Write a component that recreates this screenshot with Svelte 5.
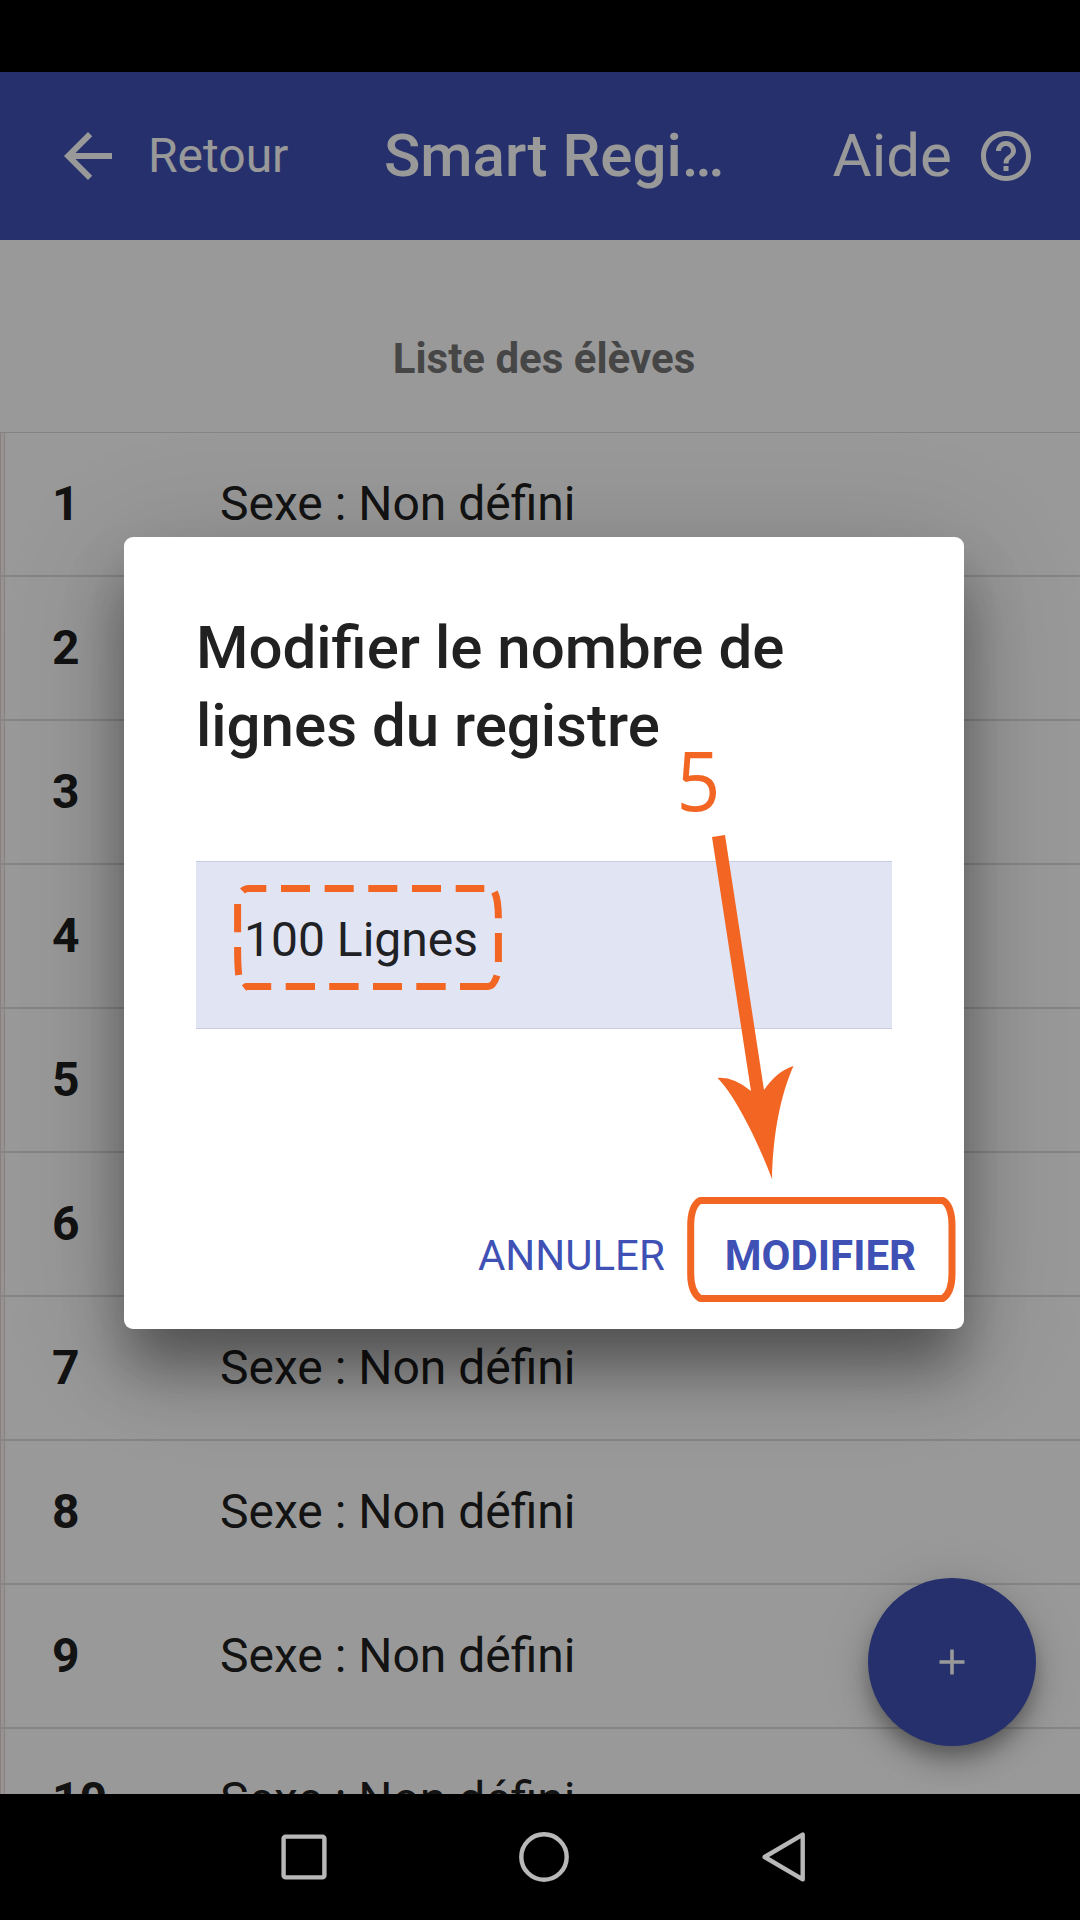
<script>
  const rows = Array.from({ length: 10 }, (_, i) => i + 1);
</script>

<div class="screen">
  <div class="status"></div>

  <header class="toolbar">
    <svg class="back" viewBox="0 0 24 24"><path d="M20 11H7.83l5.59-5.59L12 4l-8 8 8 8 1.41-1.41L7.83 13H20v-2z" /></svg>
    <span class="retour">Retour</span>
    <h1>Smart Regi…</h1>
    <span class="aide">Aide</span>
    <svg class="help" viewBox="0 0 24 24"><path d="M11 18h2v-2h-2v2zm1-16C6.48 2 2 6.48 2 12s4.48 10 10 10 10-4.48 10-10S17.52 2 12 2zm0 18c-4.41 0-8-3.59-8-8s3.59-8 8-8 8 3.59 8 8-3.59 8-8 8zm0-14c-2.21 0-4 1.79-4 4h2c0-1.1.9-2 2-2s2 .9 2 2c0 2-3 1.75-3 5h2c0-2.25 3-2.5 3-5 0-2.21-1.79-4-4-4z" /></svg>
  </header>

  <main>
    <h2>Liste des élèves</h2>
    <div class="list">
      {#each rows as n}
        <div class="row"><b>{n}</b><span>Sexe : Non défini</span></div>
      {/each}
    </div>
    <button class="fab" aria-label="Ajouter">
      <svg viewBox="0 0 26 26"><path d="M13 .5v25M.5 13h25" /></svg>
    </button>
  </main>

  <nav>
    <svg viewBox="0 0 56 56"><rect x="7.6" y="7.6" width="40.8" height="40.8" rx="2" /></svg>
    <svg viewBox="0 0 56 56"><circle cx="28" cy="28" r="22.7" /></svg>
    <svg viewBox="0 0 56 56"><path d="M46.7 5.6v44.8L8.6 28z" /></svg>
  </nav>

  <div class="overlay">
    <section class="dialog">
      <h3>Modifier le nombre de lignes du registre</h3>
      <div class="field">100 Lignes</div>
      <div class="actions">
        <span>ANNULER</span>
        <strong>MODIFIER</strong>
      </div>
    </section>
  </div>

  <svg class="marks" viewBox="0 0 1080 1920">
    <g class="stroke">
      <path d="M242.5 891Q245 888.5 249 888.5H266.3M281 888.5h29M324.7 888.5h29M368.3 888.5h29M412 888.5h29M455.7 888.5h28.6" />
      <path d="M494.5 892Q498.4 900 498.4 918.3M498.4 933v29M497 975.5Q493.5 986.5 488 986.5H460M445.7 986.5h-29.4M402 986.5h-29M358.6 986.5h-29.4M315 986.5h-29.3M271.2 986.5H246L244 988" />
      <path d="M237.6 904v28.3M237.6 947Q237.6 965 238.7 975" />
      <path d="M700 1200.5H943Q952 1206 952 1226V1274Q952 1292 943 1298.5H700Q690.7 1292 690.7 1274V1226Q690.7 1206 700 1200.5Z" />
    </g>
    <path class="arrow" d="M712 837L725 835L764 1090Q777 1071 793.5 1066C781 1094 773 1132 772 1179C757 1139 734 1094 717.5 1078Q733 1076.5 751 1091Z" />
    <text x="676.5" y="811" textLength="44" lengthAdjust="spacingAndGlyphs">5</text>
  </svg>
</div>

<style>
  :global(body) { margin: 0; background: #000; }
  .screen {
    position: relative;
    display: flex;
    flex-direction: column;
    width: 1080px;
    height: 1920px;
    overflow: hidden;
    background: #000;
    font-family: Roboto, sans-serif;
  }
  h1, h2, h3 { margin: 0; }
  .status { height: 72px; flex: none; }
  .toolbar {
    display: flex;
    align-items: center;
    flex: none;
    height: 168px;
    box-sizing: border-box;
    padding-left: 52px;
    background: #3f51b5;
    color: #fff;
    white-space: nowrap;
  }
  .toolbar svg { fill: #fff; flex: none; }
  .toolbar span, h1 { padding-bottom: 2px; }
  .back { width: 72px; height: 72px; }
  .retour { width: 236px; margin-left: 24px; font-size: 48px; }
  h1 { width: 448.5px; font-size: 60px; font-weight: 500; }
  .aide { width: 143.5px; font-size: 60px; }
  .help { width: 60px; height: 60px; }
  main {
    position: relative;
    height: 1554px;
    flex: none;
    overflow: hidden;
    background: #fff;
  }
  h2 {
    box-sizing: border-box;
    height: 192px;
    padding: 45px 0 0 8px;
    line-height: 148px;
    text-align: center;
    font-size: 42px;
    font-weight: 700;
    color: #757575;
  }
  .list {
    border-top: 1px solid #dcdcdc;
    background: linear-gradient(90deg, #e8d2d2 1px, #fcf6f6 1px, #fcf6f6 4px, #e8d2d2 4px, #e8d2d2 5px, #fff 5px);
  }
  .row {
    display: flex;
    align-items: center;
    box-sizing: border-box;
    height: 144px;
    padding: 0 0 2px 52px;
    border-bottom: 2px solid #dedede;
    font-size: 48px;
    color: #212121;
  }
  .row b { width: 168px; }
  .fab {
    position: absolute;
    right: 44px;
    bottom: 48px;
    display: flex;
    align-items: center;
    justify-content: center;
    width: 168px;
    height: 168px;
    padding: 0;
    border: 0;
    border-radius: 50%;
    background: #3f51b5;
    box-shadow: 0 12px 18px -3px rgba(0, 0, 0, .26), 0 18px 30px 0 rgba(0, 0, 0, .16), 0 3px 54px 0 rgba(0, 0, 0, .12);
  }
  .fab svg { width: 26px; height: 26px; stroke: #fff; stroke-width: 3.6; }
  nav {
    display: flex;
    align-items: center;
    justify-content: center;
    gap: 184px;
    flex: none;
    height: 126px;
    padding-left: 8px;
  }
  nav svg {
    width: 56px;
    height: 56px;
    fill: none;
    stroke: #b8b8b8;
    stroke-width: 4.4;
    stroke-linejoin: round;
  }
  .overlay {
    position: absolute;
    top: 72px;
    left: 0;
    display: flex;
    justify-content: center;
    align-items: center;
    box-sizing: border-box;
    width: 1080px;
    height: 1722px;
    padding-left: 8px;
    overflow: hidden;
    background: rgba(0, 0, 0, .4);
  }
  .dialog {
    box-sizing: border-box;
    width: 840px;
    height: 792px;
    padding: 72px 72px 0;
    border-radius: 9px;
    background: #fff;
    box-shadow: 0 33px 45px -15px rgba(0, 0, 0, .18), 0 45px 60px 0 rgba(0, 0, 0, .27), 0 18px 120px 8px rgba(0, 0, 0, .16);
  }
  h3 {
    font-size: 60px;
    line-height: 78px;
    font-weight: 500;
    color: #212121;
  }
  .field {
    box-sizing: border-box;
    height: 168px;
    margin-top: 96px;
    padding-left: 48px;
    border: solid #c9cce0;
    border-width: 1px 0;
    background: #e1e4f3;
    line-height: 155px;
    font-size: 48px;
    color: #202124;
  }
  .actions {
    display: flex;
    align-items: baseline;
    justify-content: flex-end;
    gap: 60px;
    margin: 202px -24px 0 0;
    line-height: 50px;
    font-size: 42px;
    color: #3f51b5;
  }
  .actions strong { font-weight: 700; }
  .marks {
    position: absolute;
    inset: 0;
    width: 1080px;
    height: 1920px;
  }
  .stroke { fill: none; stroke: #f26522; stroke-width: 7; stroke-linejoin: round; }
  .arrow, .marks text { fill: #f26522; }
  .marks text { font-family: "Open Sans", "Noto Sans", sans-serif; font-size: 83px; }
</style>
